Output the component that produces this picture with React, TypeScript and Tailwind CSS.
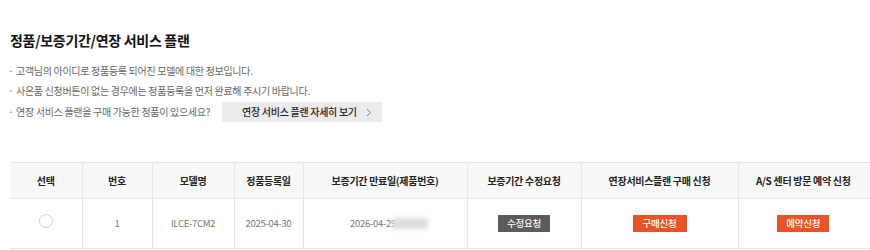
import React from "react";

const font = { fontFamily: '"Noto Sans CJK KR", "Noto Sans", sans-serif' };

export default function App() {
  return (
    <div className="w-[870px] h-[250px] bg-white overflow-hidden" style={font}>
      <div className="pl-[10px] pt-[31px]">
        <h2 className="text-[14px] font-bold text-[#111] leading-[18px] tracking-[-0.3px]">정품/보증기간/연장 서비스 플랜</h2>
        <ul className="mt-[15px] text-[10px] text-[#666] leading-[14px] tracking-[-0.3px]">
          <li className="flex items-center h-[14px]"><span className="w-[8px] -ml-[2px]">·</span>고객님의 아이디로 정품등록 되어진 모델에 대한 정보입니다.</li>
          <li className="flex items-center h-[14px] mt-[6px]"><span className="w-[8px] -ml-[2px]">·</span>사은품 신청버튼이 없는 경우에는 정품등록을 먼저 완료해 주시기 바랍니다.</li>
          <li className="flex items-center h-[20px] mt-[4px]">
            <span className="w-[8px] -ml-[2px]">·</span>연장 서비스 플랜을 구매 가능한 정품이 있으세요?
            <span className="ml-[12px] w-[160px] h-[20px] bg-[#ebebeb] flex items-center justify-between pl-[20px] pr-[10px] text-[#222] font-medium text-[10px]">
              연장 서비스 플랜 자세히 보기
              <svg width="6" height="9" viewBox="0 0 6 9" fill="none"><path d="M1 1l3.5 3.5L1 8" stroke="#777" strokeWidth="1" /></svg>
            </span>
          </li>
        </ul>
      </div>
      <div className="pl-[10px] mt-[40px]">
        <table className="border-collapse text-center w-[870px] table-fixed">
          <colgroup>
            <col className="w-[72px]" />
            <col className="w-[70px]" />
            <col className="w-[82px]" />
            <col className="w-[69px]" />
            <col className="w-[164px]" />
            <col className="w-[114px]" />
            <col className="w-[157px]" />
            <col />
          </colgroup>
          <thead>
            <tr className="bg-[#f8f8f8] h-[36px] border-t border-b border-[#e6e6e6] text-[10px] font-bold text-[#222] tracking-[-0.3px]">
              <th className="border-r border-[#e6e6e6] font-bold">선택</th>
              <th className="border-r border-[#e6e6e6] font-bold">번호</th>
              <th className="border-r border-[#e6e6e6] font-bold">모델명</th>
              <th className="border-r border-[#e6e6e6] font-bold">정품등록일</th>
              <th className="border-r border-[#e6e6e6] font-bold">보증기간 만료일(제품번호)</th>
              <th className="border-r border-[#e6e6e6] font-bold">보증기간 수정요청</th>
              <th className="border-r border-[#e6e6e6] font-bold">연장서비스플랜 구매 신청</th>
              <th className="font-bold pr-[12px]">A/S 센터 방문 예약 신청</th>
            </tr>
          </thead>
          <tbody>
            <tr className="h-[50px] border-b border-[#e6e6e6] text-[9.5px] text-[#777] tracking-[-0.3px]">
              <td className="border-r border-[#e6e6e6]">
                <span className="inline-block w-[14px] h-[14px] rounded-full border border-[#cfcfcf] bg-white -mt-[8px] align-middle" />
              </td>
              <td className="border-r border-[#e6e6e6]">1</td>
              <td className="border-r border-[#e6e6e6]">ILCE-7CM2</td>
              <td className="border-r border-[#e6e6e6]">2025-04-30</td>
              <td className="border-r border-[#e6e6e6]">
                <span className="inline-flex items-center pl-[8px]">
                  2026-04-29
                  <span className="inline-block w-[36px] h-[11px] bg-[#dcdcdc] blur-[2px] -ml-[4px]" />
                </span>
              </td>
              <td className="border-r border-[#e6e6e6]">
                <span className="inline-flex items-center justify-center w-[52px] h-[17px] bg-[#5b5b5d] text-white text-[9.5px] font-medium">수정요청</span>
              </td>
              <td className="border-r border-[#e6e6e6]">
                <span className="inline-flex items-center justify-center w-[54px] h-[17px] bg-[#ea5425] text-white text-[9.5px] font-medium">구매신청</span>
              </td>
              <td className="pr-[12px]">
                <span className="inline-flex items-center justify-center w-[52px] h-[17px] bg-[#ea5425] text-white text-[9.5px] font-medium">예약신청</span>
              </td>
            </tr>
          </tbody>
        </table>
      </div>
    </div>
  );
}
